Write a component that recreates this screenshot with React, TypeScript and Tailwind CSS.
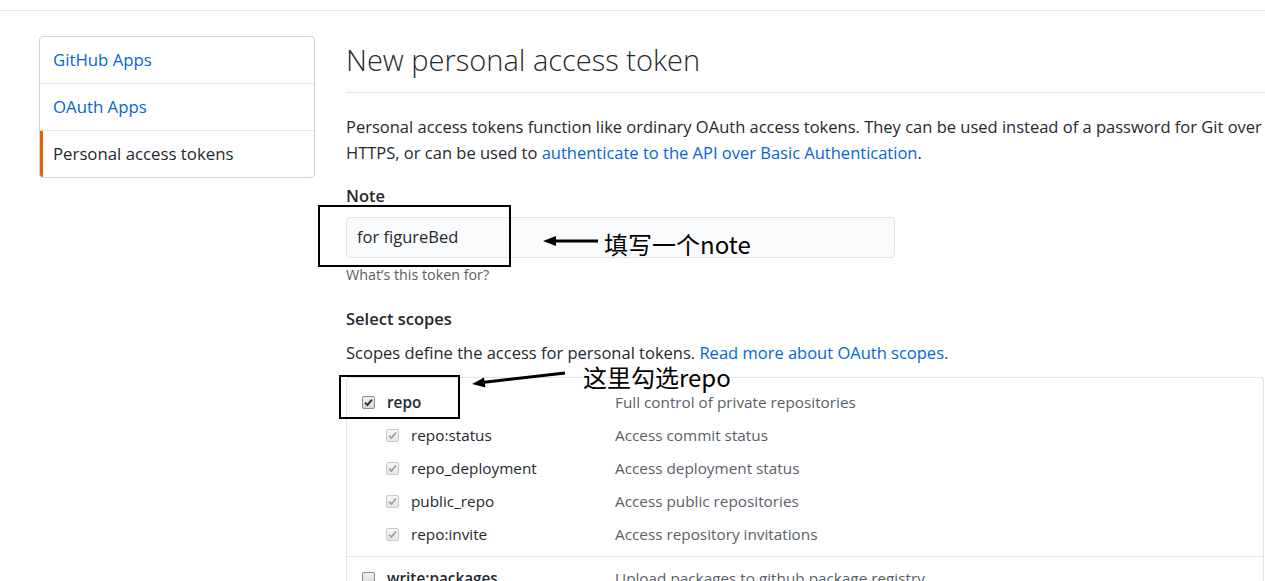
const links = ['GitHub Apps', 'OAuth Apps']

const subScopes = [
  { name: 'repo:status', desc: 'Access commit status' },
  { name: 'repo_deployment', desc: 'Access deployment status' },
  { name: 'public_repo', desc: 'Access public repositories' },
  { name: 'repo:invite', desc: 'Access repository invitations' },
]

const Box = ({ checked, strong }: { checked?: boolean; strong?: boolean }) => (
  <span
    className={`relative inline-block h-[13px] w-[13px] shrink-0 rounded-[2px] border ${
      strong ? 'border-[#8a8a8a] bg-[linear-gradient(#f2f2f2,#d6d6d6)]' : 'border-[#c9c9c9] bg-[linear-gradient(#f7f7f7,#e6e6e6)]'
    }`}
  >
    {checked && (
      <svg viewBox="0 0 13 13" className="absolute inset-[-1px] h-[13px] w-[13px]">
        <path
          d="M3 6.6 L5.4 9 L10 3.6"
          fill="none"
          stroke={strong ? '#333' : '#9a9a9a'}
          strokeWidth={strong ? 2 : 1.6}
        />
      </svg>
    )}
  </span>
)

const App = () => {
  return (
    <div className="relative min-h-screen overflow-hidden bg-white font-['Open_Sans','Liberation_Sans',sans-serif] text-[16.5px] text-[#24292e]">
      <div className="h-[11px] border-b border-[#e1e4e8]" />

      <div className="flex pl-[39px] pt-[25px]">
        <nav className="w-[276px] shrink-0 self-start overflow-hidden rounded-[4px] border border-[#d1d5da] text-[16.8px]">
          {links.map((link) => (
            <div key={link} className="flex h-[47px] items-center border-b border-[#e1e4e8] px-[13px] text-[#0366d6]">
              {link}
            </div>
          ))}
          <div className="flex h-[46px] items-center border-l-[3px] border-[#e36209] pl-[10px] font-medium">
            Personal access tokens
          </div>
        </nav>

        <main className="ml-[31px] w-[1000px] shrink-0">
          <h1 className="border-b border-[#e1e4e8] pb-[14px] pt-[6px] text-[29px] font-light leading-[36px]">
            New personal access token
          </h1>

          <p className="mt-[21px] whitespace-nowrap leading-[26px]">
            Personal access tokens function like ordinary OAuth access tokens. They can be used instead of a password for Git over
            <br />
            HTTPS, or can be used to{' '}
            <span className="text-[#0366d6]">authenticate to the API over Basic Authentication</span>.
          </p>

          <div className="mt-[18px] font-semibold leading-[24px]">Note</div>
          <div className="mt-[9px] flex h-[41px] w-[549px] items-center rounded-[4px] border border-[#e1e4e8] bg-[#fafbfc] px-[10px]">
            for figureBed
          </div>
          <div className="mt-[7px] text-[14.3px] leading-[20px] text-[#586069]">What’s this token for?</div>

          <div className="mt-[22px] font-semibold leading-[24px]">Select scopes</div>
          <div className="mt-[10px] leading-[24px]">
            Scopes define the access for personal tokens.{' '}
            <span className="text-[#0366d6]">Read more about OAuth scopes.</span>
          </div>

          <div className="mt-[12px] w-[918px] rounded-t-[4px] border-l border-r border-t border-[#e1e4e8] text-[15.3px]">
            <div className="border-b border-[#e1e4e8] pb-[5px] pt-[8px]">
              <div className="grid h-[33px] grid-cols-[268px_1fr] items-center">
                <div className="flex items-center gap-[12px] pl-[15px]">
                  <Box checked strong />
                  <span className="font-semibold">repo</span>
                </div>
                <div className="text-[#586069]">Full control of private repositories</div>
              </div>
              {subScopes.map((scope) => (
                <div key={scope.name} className="grid h-[33px] grid-cols-[268px_1fr] items-center">
                  <div className="flex items-center gap-[12px] pl-[39px]">
                    <Box checked />
                    <span>{scope.name}</span>
                  </div>
                  <div className="text-[#586069]">{scope.desc}</div>
                </div>
              ))}
            </div>
            <div className="pt-[5px]">
              <div className="grid h-[33px] grid-cols-[268px_1fr] items-center">
                <div className="flex items-center gap-[12px] pl-[15px]">
                  <Box strong />
                  <span className="font-semibold">write:packages</span>
                </div>
                <div className="text-[#586069]">Upload packages to github package registry</div>
              </div>
            </div>
          </div>
        </main>
      </div>

      {/* annotations drawn over the screenshot */}
      <div className="absolute left-[318px] top-[205px] h-[62px] w-[193px] border-2 border-black" />
      <div className="absolute left-[339px] top-[375px] h-[44px] w-[121px] border-2 border-black" />

      <svg className="absolute left-0 top-0 h-[581px] w-[1265px]" viewBox="0 0 1265 581">
        <line x1="598" y1="241" x2="552" y2="241" stroke="#000" strokeWidth="3" />
        <polygon points="543,241 556,236 556,246" fill="#000" />
        <line x1="565" y1="373" x2="482" y2="382.5" stroke="#000" strokeWidth="3" />
        <polygon points="472,384 484,377.5 485.5,387.5" fill="#000" />
      </svg>

      <div className="absolute left-[604px] top-[229px] font-['Noto_Sans_CJK_SC',sans-serif] text-[24px] leading-[30px] text-black">
        填写一个note
      </div>
      <div className="absolute left-[583px] top-[362px] font-['Noto_Sans_CJK_SC',sans-serif] text-[24px] leading-[30px] text-black">
        这里勾选repo
      </div>
    </div>
  )
}

export default App
